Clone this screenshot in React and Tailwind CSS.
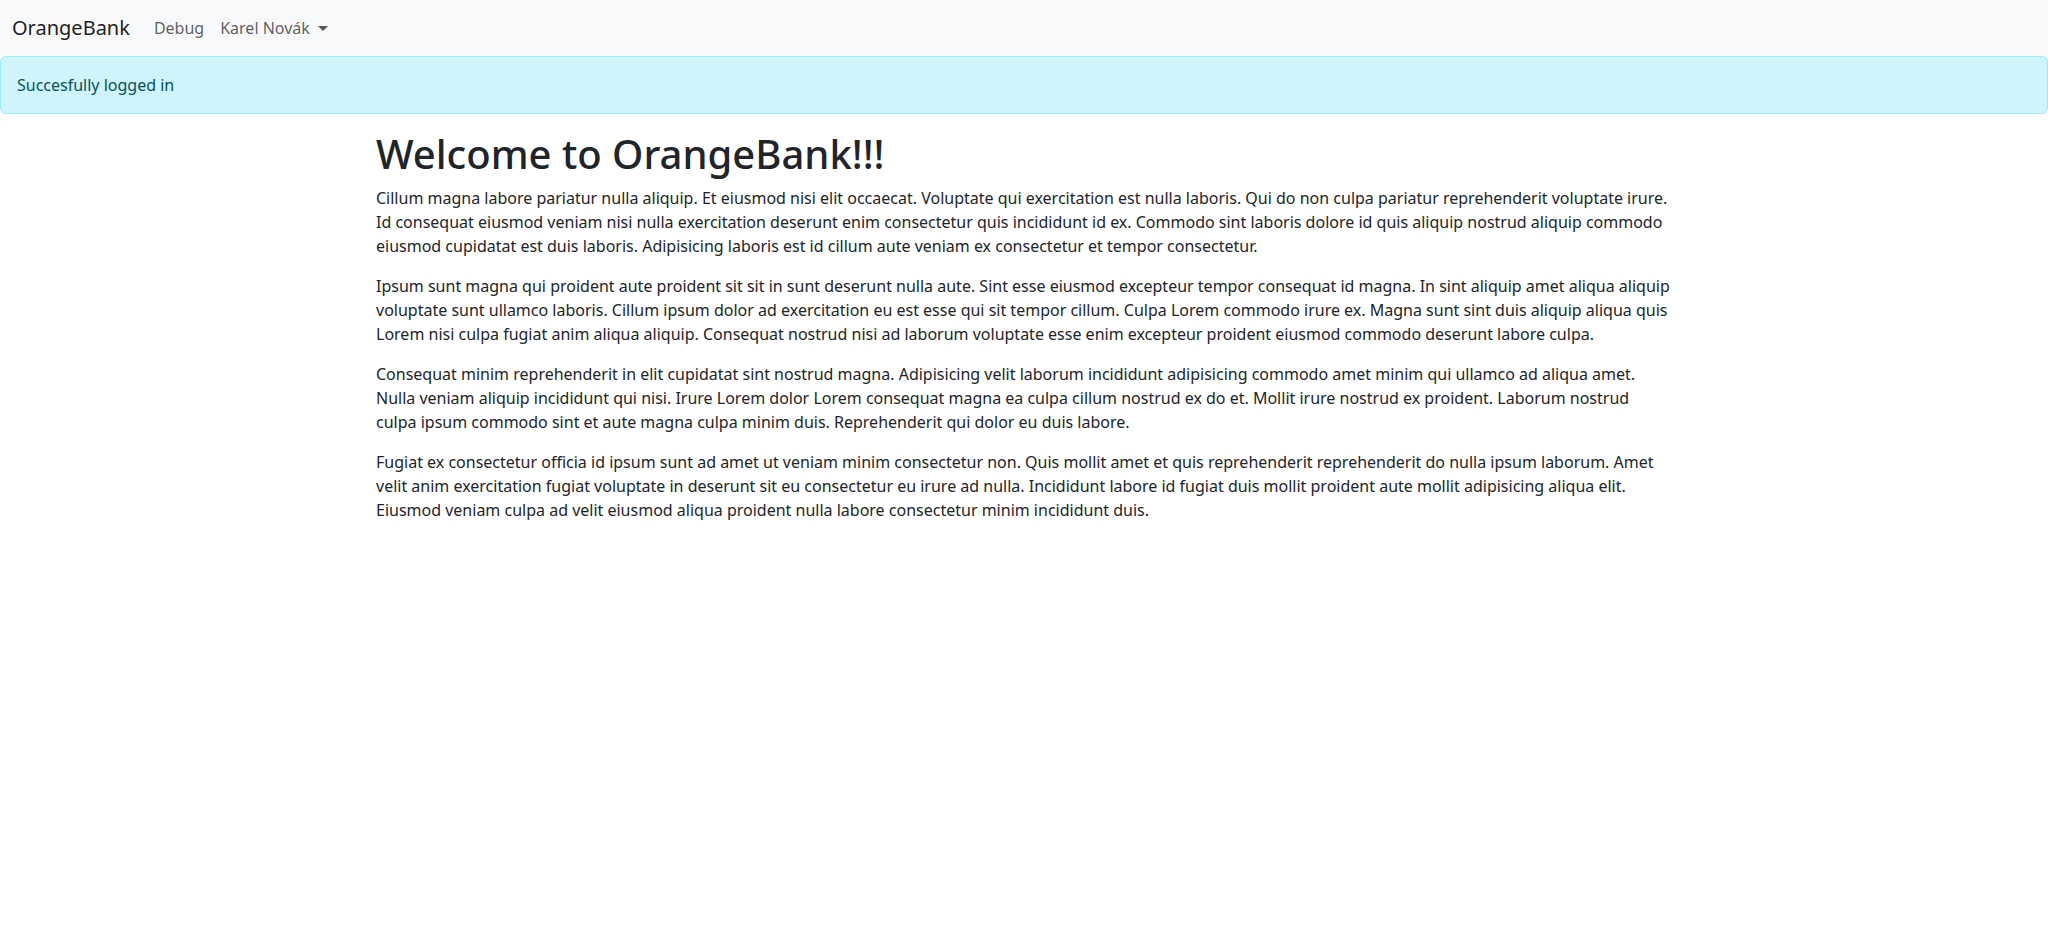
export default function App() {
  const paragraphs = [
    "Cillum magna labore pariatur nulla aliquip. Et eiusmod nisi elit occaecat. Voluptate qui exercitation est nulla laboris. Qui do non culpa pariatur reprehenderit voluptate irure. Id consequat eiusmod veniam nisi nulla exercitation deserunt enim consectetur quis incididunt id ex. Commodo sint laboris dolore id quis aliquip nostrud aliquip commodo eiusmod cupidatat est duis laboris. Adipisicing laboris est id cillum aute veniam ex consectetur et tempor consectetur.",
    "Ipsum sunt magna qui proident aute proident sit sit in sunt deserunt nulla aute. Sint esse eiusmod excepteur tempor consequat id magna. In sint aliquip amet aliqua aliquip voluptate sunt ullamco laboris. Cillum ipsum dolor ad exercitation eu est esse qui sit tempor cillum. Culpa Lorem commodo irure ex. Magna sunt sint duis aliquip aliqua quis Lorem nisi culpa fugiat anim aliqua aliquip. Consequat nostrud nisi ad laborum voluptate esse enim excepteur proident eiusmod commodo deserunt labore culpa.",
    "Consequat minim reprehenderit in elit cupidatat sint nostrud magna. Adipisicing velit laborum incididunt adipisicing commodo amet minim qui ullamco ad aliqua amet. Nulla veniam aliquip incididunt qui nisi. Irure Lorem dolor Lorem consequat magna ea culpa cillum nostrud ex do et. Mollit irure nostrud ex proident. Laborum nostrud culpa ipsum commodo sint et aute magna culpa minim duis. Reprehenderit qui dolor eu duis labore.",
    "Fugiat ex consectetur officia id ipsum sunt ad amet ut veniam minim consectetur non. Quis mollit amet et quis reprehenderit reprehenderit do nulla ipsum laborum. Amet velit anim exercitation fugiat voluptate in deserunt sit eu consectetur eu irure ad nulla. Incididunt labore id fugiat duis mollit proident aute mollit adipisicing aliqua elit. Eiusmod veniam culpa ad velit eiusmod aliqua proident nulla labore consectetur minim incididunt duis.",
  ];

  return (
    <div className="min-h-screen bg-white text-[#212529] text-base leading-6 font-['Noto_Sans',sans-serif]">
      <nav className="bg-[#f8f9fa] py-2">
        <div className="px-3 flex items-center">
          <a className="text-xl leading-[30px] py-[5px] mr-4 text-black/90">OrangeBank</a>
          <ul className="flex items-center">
            <li>
              <a className="block px-2 py-2 text-black/65">Debug</a>
            </li>
            <li>
              <a className="flex items-center px-2 py-2 text-black/65">
                Karel Novák
                <span className="ml-[8px] w-0 h-0 border-t-[5px] border-t-black/65 border-x-[5px] border-x-transparent"></span>
              </a>
            </li>
          </ul>
        </div>
      </nav>

      <div className="bg-[#cff4fc] border border-[#9eeaf9] rounded-md p-4 mb-4 text-[#055160]">
        Succesfully logged in
      </div>

      <main className="max-w-[1320px] mx-auto px-3">
        <h1 className="text-[40px] leading-[48px] font-medium mb-2">Welcome to OrangeBank!!!</h1>
        {paragraphs.map((p, i) => (
          <p key={i} className="mb-4">
            {p}
          </p>
        ))}
      </main>
    </div>
  );
}
